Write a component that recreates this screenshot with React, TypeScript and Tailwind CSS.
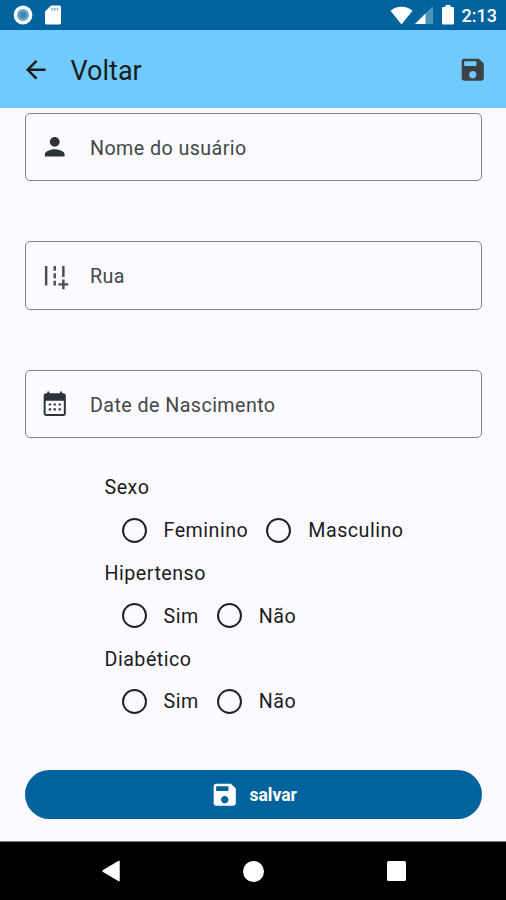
import React from 'react';
import clsx from 'clsx';

const icons = {
  back: 'M20 11H7.83l5.59-5.59L12 4l-8 8 8 8 1.41-1.41L7.83 13H20v-2z',
  save: 'M17 3H5c-1.11 0-2 .9-2 2v14c0 1.1.89 2 2 2h14c1.1 0 2-.9 2-2V7l-4-4zm-5 16c-1.66 0-3-1.34-3-3s1.34-3 3-3 3 1.34 3 3-1.34 3-3 3zm3-10H5V5h10v4z',
  person:
    'M12 12c2.21 0 4-1.79 4-4s-1.79-4-4-4-4 1.79-4 4 1.79 4 4 4zm0 2c-2.67 0-8 1.34-8 4v2h16v-2c0-2.66-5.33-4-8-4z',
  road: 'M20 18v-3h-2v3h-3v2h3v3h2v-3h3v-2zM18 4h2v9h-2zM4 4h2v16H4zM11 4h2v4h-2zM11 10h2v4h-2zM11 16h2v4h-2z',
  calendar:
    'M19 3.500h-1V2h-1.600v1.500H7.600V2H6v1.500H5c-1.110 0-2 .9-2 2V20c0 1.100.89 2 2 2h14c1.100 0 2-.9 2-2V5.500c0-1.100-.9-2-2-2zm.4 16.900H4.600V9.500h14.800v10.900zM8.900 13.500H7.100v-1.800h1.800v1.800zm4 0h-1.800v-1.800h1.800v1.800zm4 0h-1.800v-1.800h1.800v1.800zm-8 4H7.100v-1.800h1.800v1.800zm4 0h-1.800v-1.800h1.800v1.800zm4 0h-1.800v-1.800h1.800v1.800z',
};

type IconName = keyof typeof icons;

const Icon: React.FC<{ name: IconName; className?: string }> = ({ name, className }) => (
  <svg viewBox="0 0 24 24" fill="currentColor" className={clsx('size-[29.5px] shrink-0', className)}>
    <path d={icons[name]} />
  </svg>
);

const fields: { label: string; icon: IconName; color: string }[] = [
  { label: 'Nome do usuário', icon: 'person', color: 'text-[#2b3338]' },
  { label: 'Rua', icon: 'road', color: 'text-[#4a4f54]' },
  { label: 'Date de Nascimento', icon: 'calendar', color: 'text-[#2b3338]' },
];

const groups = [
  { title: 'Sexo', options: ['Feminino', 'Masculino'] },
  { title: 'Hipertenso', options: ['Sim', 'Não'] },
  { title: 'Diabético', options: ['Sim', 'Não'] },
];

const StatusBar: React.FC = () => (
  <div className="h-[30px] bg-[#00639d] flex items-center justify-between pl-[13px] pr-[9px] text-white">
    <div className="flex items-center gap-[12px]">
      <svg viewBox="0 0 20 20" className="size-[20px]">
        <circle cx="10" cy="10" r="7.7" fill="#68a5c8" stroke="#fff" strokeWidth="3.4" />
        <circle cx="10" cy="10" r="3.6" fill="#4089b5" />
      </svg>
      <svg viewBox="0 0 16 20" className="w-[16px] h-[20px]">
        <path d="M6 .5h8.500a1.500 1.500 0 0 1 1.500 1.500v16a1.500 1.500 0 0 1-1.500 1.500h-13A1.500 1.500 0 0 1 0 18V6.500z" fill="#fff" />
        <path d="M6.200 3h1.600v2.500H6.200zM9 3h1.600v2.500H9zM11.800 3h1.600v2.500h-1.600z" fill="#7fb1ce" />
      </svg>
    </div>
    <div className="flex items-center">
      <svg viewBox="0 0 23 19" className="w-[23px] h-[19px]">
        <path d="M11.500 18.500L.5 4.800C6.500-.6 16.500-.6 22.500 4.800z" fill="#fff" />
      </svg>
      <svg viewBox="0 0 18 18" className="w-[18px] h-[18px] ml-[2px]">
        <path d="M18 0v18H0z" fill="#4d92bb" />
        <path d="M10.500 7.500V18H0z" fill="#fff" />
      </svg>
      <svg viewBox="0 0 12 20" className="w-[12px] h-[20px] ml-[9px]">
        <path d="M3.500 0h5v2H11a1 1 0 0 1 1 1v15.500a1 1 0 0 1-1 1H1a1 1 0 0 1-1-1V3a1 1 0 0 1 1-1h2.500z" fill="#fff" />
      </svg>
      <span className="ml-[8px] mt-[2px] text-[18px] leading-[20px] font-medium">2:13</span>
    </div>
  </div>
);

const App: React.FC = () => (
  <div className="w-[506px] h-[900px] flex flex-col overflow-hidden bg-[#fdfbff] font-['Roboto',sans-serif] text-[#1a1c1e]">
    <StatusBar />

    <header className="h-[78px] bg-[#71cafc] flex items-center pl-[21px] pr-[19px]">
      <Icon name="back" className="mt-[1px]" />
      <h1 className="ml-[20px] mt-[4px] text-[27px] leading-[34px]">Voltar</h1>
      <Icon name="save" className="ml-auto mt-[1px] text-[#3b4247]" />
    </header>

    <main className="flex-1 flex flex-col pl-[25px] pr-[24px] pt-[4.5px]">
      <div className="flex flex-col gap-[60px]">
        {fields.map((field) => (
          <div
            key={field.label}
            className="h-[68.5px] flex items-center pl-[14px] border-[1.5px] border-[#808387] rounded-[5px]"
          >
            <Icon name={field.icon} className={field.color} />
            <span className="ml-[20.5px] mt-[3px] text-[19.66px] leading-[29px] tracking-[0.44px] text-[#42474b]">
              {field.label}
            </span>
          </div>
        ))}
      </div>

      <div className="mt-[35px] pl-[79.5px] text-[19.66px] tracking-[0.5px]">
        {groups.map((group) => (
          <div key={group.title} className="h-[85.8px]">
            <p className="h-[29.5px] leading-[29.5px]">{group.title}</p>
            <div className="h-[55px] pl-[17px] flex items-center">
              {group.options.map((option) => (
                <label key={option} className="flex items-center mr-[18px]">
                  <span className="size-[25px] shrink-0 rounded-full border-[2.5px] border-[#1f2429]" />
                  <span className="ml-[17px] mt-[1px] leading-[29.5px]">{option}</span>
                </label>
              ))}
            </div>
          </div>
        ))}
      </div>

      <button className="mt-auto mb-[22px] h-[49px] w-full shrink-0 rounded-full bg-[#00639d] text-white flex items-center justify-center gap-[10px]">
        <Icon name="save" />
        <span className="mt-[1px] text-[17.5px] font-bold">salvar</span>
      </button>
    </main>

    <nav className="h-[59px] bg-black border-t border-[#77777a] flex items-center justify-between pl-[101px] pr-[100px]">
      <svg viewBox="0 0 20 22" className="w-[20px] h-[22px]">
        <path d="M18 1.500v19L2 11z" fill="#fff" stroke="#fff" strokeWidth="1.500" strokeLinejoin="round" />
      </svg>
      <span className="size-[21px] rounded-full bg-white" />
      <span className="size-[19.5px] rounded-[1.5px] bg-white" />
    </nav>
  </div>
);

export default App;
